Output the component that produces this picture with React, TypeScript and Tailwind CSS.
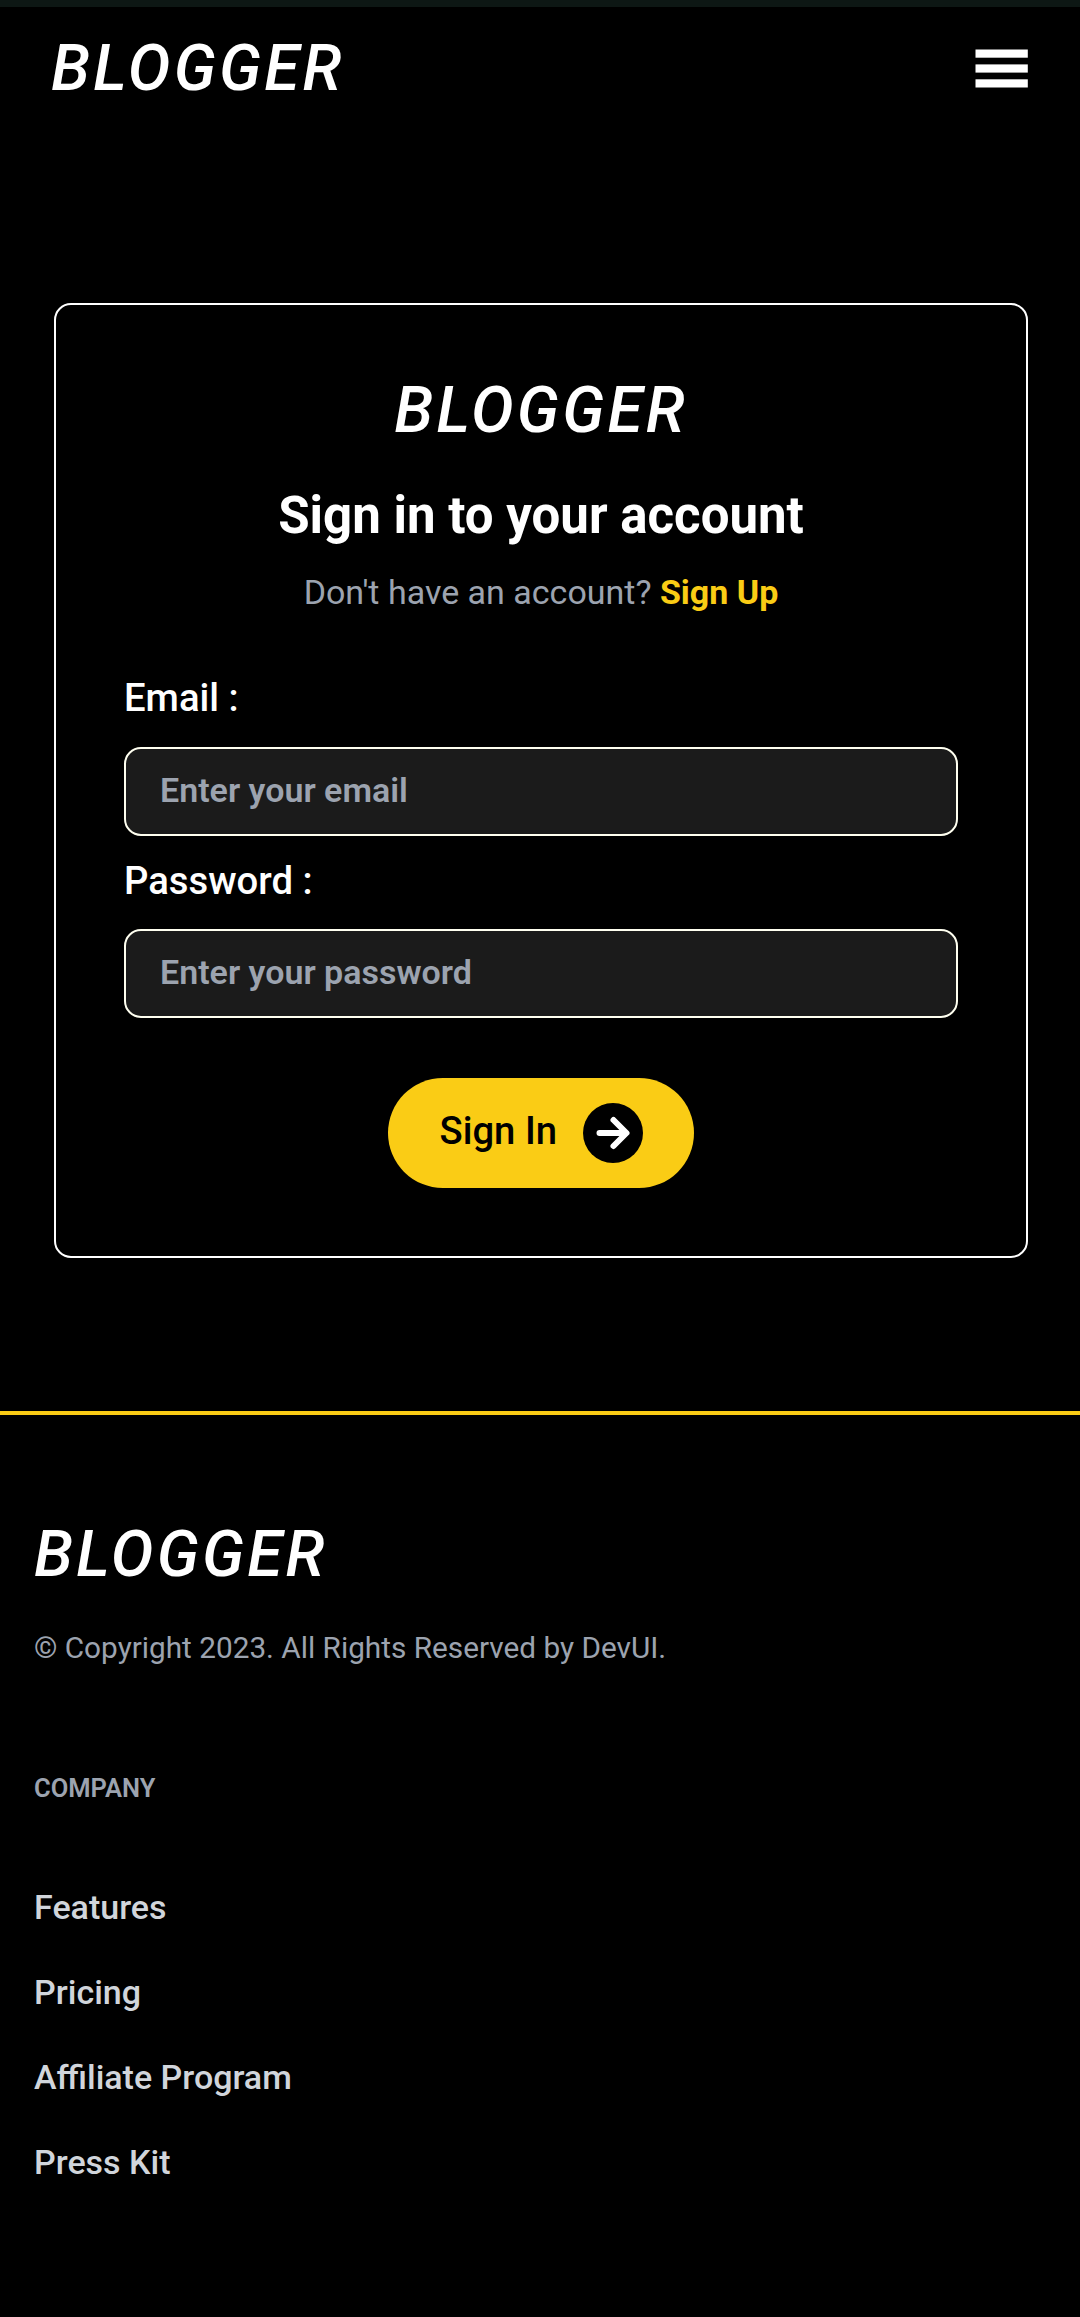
import React from "react";

function Logo({ className = "" }: { className?: string }) {
  return (
    <div className={`text-[63.75px] leading-[76px] font-medium italic tracking-[3.2px] ${className}`}>
      BLOGGER
    </div>
  );
}

function Field({ label, placeholder, type, className }: { label: string; placeholder: string; type: string; className: string }) {
  return (
    <label className="block">
      <span className="block text-[38.25px] leading-[58px] font-medium">{label}</span>
      <input
        type={type}
        placeholder={placeholder}
        className={`block h-[89px] w-full rounded-[17px] border-2 border-[#fffff0] bg-[#1b1b1b] px-[34px] pb-[4px] text-[34px] font-semibold outline-none placeholder:text-[#9ca3af] ${className}`}
      />
    </label>
  );
}

const links = ["Features", "Pricing", "Affiliate Program", "Press Kit"];

export default function App() {
  return (
    <div className="min-h-[2317px] w-[1080px] overflow-hidden bg-black font-['Roboto',sans-serif] text-white">
      <div className="h-[7px] bg-[#0d1714]" />
      <header className="flex items-center justify-between pt-[24px] pr-[52px] pl-[51px]">
        <Logo />
        <button aria-label="Open menu">
          <svg viewBox="0 0 53 40" className="h-[40px] w-[53px]" fill="#fff">
            <rect x="0.5" y="0.5" width="52.3" height="8.2" />
            <rect x="0.5" y="15.4" width="52.3" height="8.2" />
            <rect x="0.5" y="30.3" width="52.3" height="8.2" />
          </svg>
        </button>
      </header>

      <main className="mt-[196px] mr-[52px] ml-[54px] h-[955px] rounded-[17px] border-2 border-white px-[68px] pt-[68px]">
        <Logo className="text-center" />
        <h1 className="mt-[35px] text-center text-[51px] leading-[64px] font-bold">Sign in to your account</h1>
        <p className="mt-[18px] text-center text-[34px] leading-[52px] text-[#9ca3af]">
          Don't have an account? <a className="font-bold text-[#facc15]">Sign Up</a>
        </p>
        <form className="mt-[51px] flex flex-col gap-[16px]">
          <Field label="Email :" placeholder="Enter your email" type="email" className="mt-[20px]" />
          <Field label="Password :" placeholder="Enter your password" type="password" className="mt-[19px]" />
          <button type="button" className="mt-[44px] flex h-[110px] w-[306px] items-center self-center rounded-[55px] bg-[#facc15] pl-[51.5px] text-black">
            <span className="w-[143.5px] pb-[2px] text-left text-[38.25px] font-medium">Sign In</span>
            <span className="flex size-[60px] items-center justify-center rounded-full bg-black">
              <svg viewBox="0 0 60 60" className="size-[60px]" fill="none" stroke="#fff" strokeWidth="6" strokeLinecap="round" strokeLinejoin="round">
                <path d="M16.5 30H43M30.5 17L43.5 30L30.5 43" />
              </svg>
            </span>
          </button>
        </form>
      </main>

      <footer className="mt-[153px] border-t-4 border-[#facc15] px-[34px] pt-[102px]">
        <Logo />
        <p className="mt-[34px] text-[29.75px] leading-[42px] text-[#9ca3af]">© Copyright 2023. All Rights Reserved by DevUI.</p>
        <h3 className="mt-[102px] text-[25.5px] leading-[34px] font-semibold text-[#9ca3af] uppercase">Company</h3>
        <ul className="mt-[76px] flex flex-col gap-[33px]">
          {links.map((l) => (
            <li key={l} className="text-[34px] leading-[52px] font-medium text-[#d1d5db]">{l}</li>
          ))}
        </ul>
      </footer>
    </div>
  );
}
